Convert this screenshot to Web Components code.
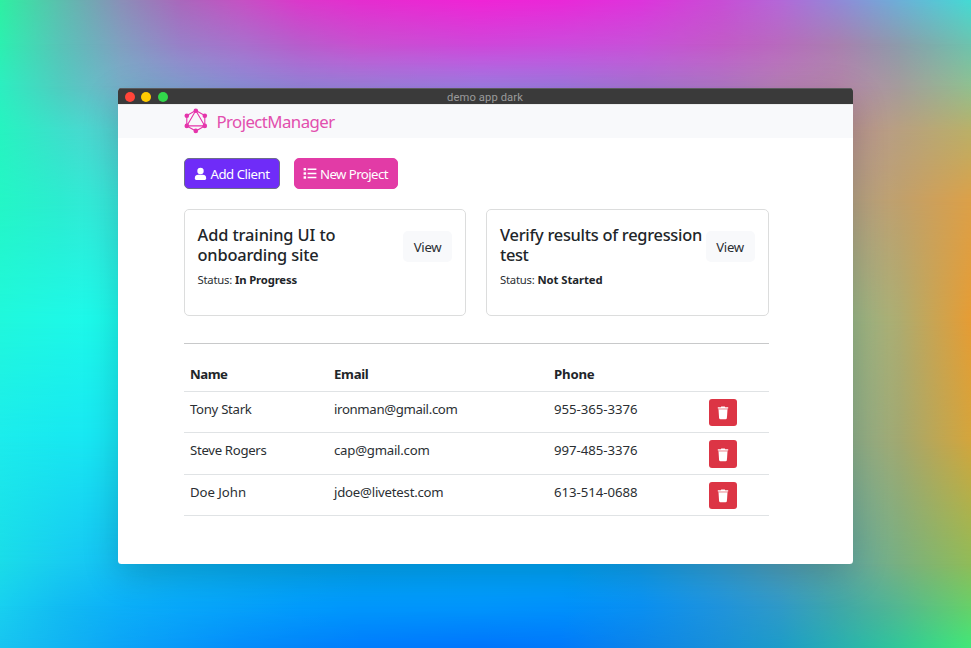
<!DOCTYPE html>
<html lang="en">
<head>
<meta charset="utf-8">
<title>ProjectManager</title>
<style>
html,body{margin:0;width:971px;height:648px;overflow:hidden}
body{font-family:"Noto Sans","Open Sans",sans-serif;font-size:13.2px;color:#2b2f33}
</style>
</head>
<body>
<mesh-backdrop>
  <app-window label="demo app dark">
    <app-navbar></app-navbar>
    <app-content>
      <action-bar>
        <action-button kind="client"><fit-text w="59">Add Client</fit-text></action-button>
        <action-button kind="project"><fit-text w="68">New Project</fit-text></action-button>
      </action-bar>
      <card-row>
        <project-card status="In Progress" sw="62"><fit-text w="138">Add training UI to</fit-text><fit-text w="121">onboarding site</fit-text></project-card>
        <project-card status="Not Started" sw="65"><fit-text w="202">Verify results of regression</fit-text><fit-text w="28.5">test</fit-text></project-card>
      </card-row>
      <client-table></client-table>
    </app-content>
  </app-window>
</mesh-backdrop>
<script>
const define = (name, html, setup) => customElements.define(name, class extends HTMLElement {
  constructor() { super(); this.attachShadow({ mode: 'open' }); }
  connectedCallback() {
    this.shadowRoot.innerHTML = typeof html === 'function' ? html(this) : html;
    if (setup) setup(this);
  }
});

// Spreads a single line of text over a fixed advance width.
define('fit-text', '<style>:host{display:block;white-space:nowrap}span{display:inline-block}</style><span><slot></slot></span>', el => {
  const fit = () => {
    const w = +el.getAttribute('w'), s = el.shadowRoot.querySelector('span'), n = el.textContent.length;
    el.style.width = w + 'px';
    s.style.letterSpacing = '0px';
    s.style.letterSpacing = ((w - s.getBoundingClientRect().width) / n) + 'px';
  };
  document.addEventListener('layout-ready', fit);
});

// Colour mesh: horizontal gradients blended vertically by masks.
const XS = [0,60,120,180,240,300,360,480,560,640,720,780,840,900,971];
const MESH = [
 [0,'2ef0a2 5cbfae 8a90b8 aa68bc c552c4 dc38cc e52dd0 f024d6 ea28d8 de34dc c94dd6 b468d8 908ad8 6cb0d8 44dbd4'],
 [44,'2cf0b0 58c4b8 80a0c0 9880c8 a870cc b85ccc c850d0 cf46da cc4adc c850d8 c25ac8 b86abe a880b0 8c9cac 6cc4ae'],
 [86,'2cefc0 50ccc0 78b0ca 84a0d2 8e90da 9884dc 9e80de a27ce6 a278e2 aa74d6 b278c8 b880b8 b688ac a49c9c 90c090'],
 [130,'26f4c0 3edfcc 58d0d4 6cb8d8 8098d0 8a8cd8 9680da 9c7cdc a078e4 a074e0 a870d4 b4889c bc9498 b8a080 bab068'],
 [200,'24f6c6 2cecd0 3ae8de 38e4dc 8098d0 8a8cd8 9680da 9c7cdc a078e4 a074e0 a870d4 a8a48c b4a48c c0a06c dca048'],
 [320,'20f8dc 1ef8e6 1cfaee 1cf4ea 20d0e0 20d0e0 20d0e0 20d0e0 20d0e0 20d0e0 60b0a0 78b898 96bc90 aeac70 e69c34'],
 [440,'1cecec 18e8f0 18e6f6 18d8f2 10c0f0 10b8f0 10b0f0 10b0f0 10b0f0 20a8e0 50a8b0 70ac9c 8cb494 a2a870 d4a53c'],
 [564,'1adce8 18ccf0 14c0f6 0cb8f6 08b2f6 06aef6 04aaf8 02aafc 00aafc 12a4f2 34a4da 50a4c0 62aca8 78b080 90bc58'],
 [606,'18d0f0 12bcf2 0cb0f8 08a8fa 06a2fa 029cfc 0098fc 0096fc 0092fc 0a90f2 2094dc 309ac8 40a8a8 54b890 68d068'],
 [648,'18c4f0 12b4f2 0ca4f6 0898f8 048cfa 0284fa 007cfc 0074fc 0078fa 0c84e8 1890d8 1c9cc8 28b0b0 30c898 40e878']
];
define('mesh-backdrop', () => {
  const layers = MESH.map(([y, cols], i) => {
    const g = 'linear-gradient(90deg,' + cols.split(' ').map((c, k) => `#${c} ${XS[k]}px`).join(',') + ')';
    const m = i ? `-webkit-mask-image:linear-gradient(180deg,transparent ${MESH[i-1][0]}px,#000 ${y}px)` : '';
    return `<div style="background:${g};${m}"></div>`;
  }).join('');
  return `<style>:host{display:grid;width:971px;height:648px;overflow:hidden}
  div,section{grid-area:1/1}section{padding:87.5px 0 0 117.5px;z-index:1}</style>${layers}<section><slot></slot></section>`;
});

define('app-window', el => `<style>
:host{display:flex;flex-direction:column;width:735px;height:476px;border-radius:3.5px;overflow:hidden;background:#fff;box-shadow:0 10px 36px rgba(0,0,0,.2)}
header{display:grid;grid-template-columns:1fr auto 1fr;align-items:center;height:16.5px;flex:none;background:#3a3a3a;box-shadow:inset 0 1px #5a5a5c;color:#9b9b9b;font:11.2px Roboto,sans-serif}
nav{display:flex;gap:6.8px;padding:2px 0 0 7px}
i{width:10px;height:10px;border-radius:50%}
fit-text{padding-top:3.5px}
</style><header><nav><i style="background:#ff4539"></i><i style="background:#ffcc02"></i><i style="background:#32d74b"></i></nav><fit-text w="76">${el.getAttribute('label')}</fit-text></header><slot></slot>`);

define('app-navbar', `<style>
:host{display:flex;align-items:center;height:33.5px;flex:none;background:#f8f9fb;padding-left:65.5px;color:#e24fae;font-size:16.8px;box-shadow:inset 0 1px #eceded;gap:7.5px}
svg{display:block}fit-text{padding-top:2.5px;line-height:24px}
</style><svg width="26" height="26" viewBox="0 0 26 26" fill="none" stroke="#e535ab" stroke-width="1.1"><path d="M12.8 2.5 3.8 7.6v10.3l9 5.2 9-5.2V7.6zM12.8 2.5 3.8 17.9h18z"/><g fill="#e535ab" stroke="none"><circle cx="12.8" cy="2.8" r="2.3"/><circle cx="3.8" cy="7.7" r="2.3"/><circle cx="21.8" cy="7.7" r="2.3"/><circle cx="3.8" cy="17.9" r="2.3"/><circle cx="21.8" cy="17.9" r="2.3"/><circle cx="12.8" cy="22.9" r="2.3"/></g></svg><fit-text w="118">ProjectManager</fit-text>`);

define('app-content', `<style>:host{display:block;padding:20.5px 83.5px 0 66px}</style><slot></slot>`);
define('action-bar', `<style>:host{display:flex;gap:13.5px}</style><slot></slot>`);
define('card-row', `<style>:host{display:flex;gap:20px;margin-top:20px;padding-bottom:27px;border-bottom:1px solid #c8c9ca}</style><slot></slot>`);

const ICONS = {
  client: '<svg width="13" height="14" viewBox="0 0 13 14" fill="#fff"><circle cx="6.5" cy="4" r="3.2"/><path d="M.8 11.3C.8 8.7 2.4 7.8 4.2 7.8h4.6c1.8 0 3.4.9 3.4 3.5 0 .9-.6 1.6-1.4 1.6H2.2c-.8 0-1.4-.7-1.4-1.6z"/></svg>',
  project: '<svg width="14" height="13" viewBox="0 0 14 13" fill="#fff"><path d="M.6 1.1h2.5v2.5H.6zM.6 5.2h2.5v2.5H.6zM.6 9.3h2.5v2.5H.6zM4.6 1.6h8.8v1.5H4.6zM4.6 5.7h8.8v1.5H4.6zM4.6 9.8h8.8v1.5H4.6z"/></svg>'
};
define('action-button', el => {
  const c = el.getAttribute('kind') === 'client';
  return `<style>:host{box-sizing:border-box;display:flex;align-items:center;gap:${c ? 3.5 : 3}px;width:${c ? 96.5 : 104}px;height:31px;padding-left:${c ? 9.5 : 8.5}px;border-radius:5px;color:#fff;background:${c ? '#6f2cf8' : '#e23ba6'};border:1px solid ${c ? '#6c6c8c' : '#e23ba6'}}svg{flex:none}</style>${ICONS[el.getAttribute('kind')]}<slot></slot>`;
});

define('project-card', el => `<style>
:host{box-sizing:border-box;display:block;width:282.5px;height:107px;border:1px solid #dcdddd;border-radius:5px;padding:14.5px 13px}
.top{display:flex;justify-content:space-between;align-items:center}
.title{font-size:16.4px;font-weight:500;line-height:20.4px;width:205px;color:#212529}
.view{display:flex;justify-content:center;align-items:center;flex:none;width:49px;height:31px;margin-top:4px;border-radius:5px;background:#f8f9fb}
.status{display:flex;gap:3px;font-size:11.3px;line-height:16px;margin-top:7px}
b{font-weight:700;color:#212529}
</style><div class="top"><div class="title"><slot></slot></div><div class="view"><fit-text w="27.5">View</fit-text></div></div>
<div class="status"><fit-text w="34.5">Status:</fit-text><b><fit-text w="${el.getAttribute('sw')}">${el.getAttribute('status')}</fit-text></b></div>`);

define('delete-button', `<style>:host{display:grid;place-items:center;width:28px;height:27.5px;border-radius:3px;background:#dc3545}svg{margin-top:2px}</style>
<svg width="12" height="14" viewBox="0 0 12 14" fill="#fff"><path d="M4.2.6h3.6l.4.6h3v1.2H.8V1.2h3z"/><path d="M1.4 2.4h9.2v1.3H1.4z" opacity=".6"/><path d="M1.5 3.6h9l-.6 8.4q-.1 1.2-1.3 1.2H3.4q-1.2 0-1.3-1.2z"/></svg>`);

const CLIENTS = [
  ['Tony Stark', 61.5, 'ironman@gmail.com', 123.5, '955-365-3376'],
  ['Steve Rogers', 76.5, 'cap@gmail.com', 95.5, '997-485-3376'],
  ['Doe John', 56, 'jdoe@livetest.com', 109.5, '613-514-0688']
];
define('client-table', () => `<style>
:host{display:block;margin-top:14px}
.row{box-sizing:border-box;display:grid;grid-template-columns:144px 220px 155px 60px;height:41.6px;padding:7px 0 0 6.5px;border-bottom:1px solid #e0e3e5;line-height:20px}
.head{height:33.5px;padding-top:5.5px;font-weight:700;color:#212529}
</style><div class="row head"><fit-text w="37.5">Name</fit-text><fit-text w="34.5">Email</fit-text><fit-text w="40.5">Phone</fit-text></div>` +
CLIENTS.map(c => `<div class="row"><fit-text w="${c[1]}">${c[0]}</fit-text><fit-text w="${c[3]}">${c[2]}</fit-text><fit-text w="83.5">${c[4]}</fit-text><delete-button></delete-button></div>`).join(''));

document.dispatchEvent(new Event('layout-ready'));
</script>
</body>
</html>
